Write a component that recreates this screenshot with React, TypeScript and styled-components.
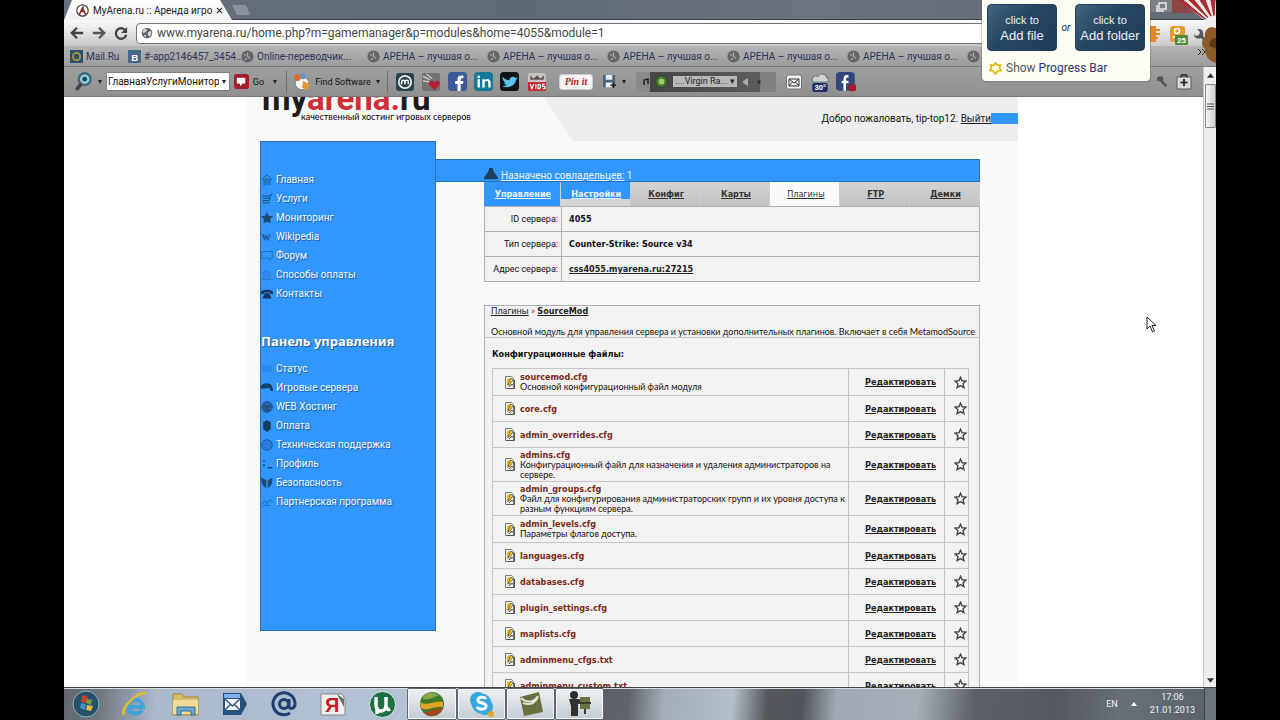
import React from "react";
import styled, { createGlobalStyle, css } from "styled-components";

const GlobalStyle = createGlobalStyle`
  * { box-sizing: border-box; }
  body { margin: 0; background: #000; }
  button, input { font: inherit; color: inherit; margin: 0; }
  button { cursor: pointer; }
`;

const ui = `Roboto, "Noto Sans", sans-serif`;
const heading = `"Noto Sans", "Open Sans", sans-serif`;
const strong = `"DejaVu Sans Condensed", "DejaVu Sans", sans-serif`;
const copy = `Lato, Roboto, sans-serif`;

/* ---------- window frame ---------- */

const Screen = styled.div`
  position: relative;
  height: 100vh;
  margin: 0 5%;
  display: flex;
  flex-direction: column;
  overflow: hidden;
  background: #fff;
  font-family: ${ui};
`;

const TabStrip = styled.header`
  display: flex;
  align-items: flex-start;
  height: 20px;
  flex: none;
  background: linear-gradient(90deg, #66707c, #5f6a77 40%, #6c737e 65%, #626a76);
  border-bottom: 1px solid #3c424b;
`;

const Tab = styled.div`
  display: flex;
  align-items: center;
  gap: 4px;
  width: 168px;
  height: 20px;
  padding: 0 12px;
  background: linear-gradient(#fff, #f2f2f2);
  clip-path: polygon(0 100%, 8px 0, 156px 0, 100% 100%);
  font-size: 10px;
  color: #222;
`;

const TabTitle = styled.span`
  flex: 1;
  white-space: nowrap;
`;

const PlainButton = styled.button`
  display: flex;
  align-items: center;
  justify-content: center;
  padding: 0;
  border: 0;
  background: none;
`;

const NewTab = styled(PlainButton)`
  width: 18px;
  height: 10px;
  margin-top: 5px;
  background: #8b929b;
  clip-path: polygon(0 0, 14px 0, 100% 100%, 5px 100%);
`;

const AddressRow = styled.div`
  display: flex;
  align-items: center;
  height: 26px;
  flex: none;
  padding: 0 50px 0 2px;
  background: linear-gradient(#fafafa, #c9c9c9);
`;

const NavButton = styled(PlainButton)`
  width: 22px;
  height: 22px;
`;

const UrlBox = styled.div`
  flex: 1;
  display: flex;
  align-items: center;
  gap: 4px;
  height: 21px;
  margin: 0 20px 0 4px;
  padding: 0 4px;
  border: 1px solid #777;
  border-radius: 4px;
  background: #fff;
`;

const UrlInput = styled.input`
  flex: 1;
  min-width: 0;
  padding: 0;
  border: 0;
  outline: 0;
  background: none;
  font-size: 12px;
  color: #444;
`;

const BookmarkBar = styled.nav`
  display: flex;
  align-items: center;
  height: 21px;
  flex: none;
  padding-left: 6px;
  background: linear-gradient(#b4b4b4, #9c9c9c);
  border-bottom: 1px solid #7a7a7a;
  overflow: hidden;
`;

const Bookmark = styled.a<{ $width: number }>`
  display: flex;
  align-items: center;
  gap: 3px;
  flex: none;
  width: ${(p) => p.$width}px;
  font-size: 10px;
  color: #2c3560;
  white-space: nowrap;
  text-decoration: none;
`;

/* ---------- extension toolbar ---------- */

const Body = styled.div`
  flex: 1;
  min-height: 0;
  display: flex;
`;

const BodyMain = styled.div`
  flex: 1;
  min-width: 0;
  display: flex;
  flex-direction: column;
`;

const Toolbar = styled.div`
  display: flex;
  align-items: center;
  height: 30px;
  flex: none;
  padding: 0 8px 0 6px;
  background: linear-gradient(#9f9f9f, #8f8f8f);
  border-bottom: 1px solid #777;
  font-size: 9px;
  color: #111;
`;

const ToolButton = styled(PlainButton)<{ $width?: number }>`
  width: ${(p) => p.$width ?? 26}px;
  height: 24px;
  gap: 4px;
  flex: none;
`;

const Combo = styled.div`
  display: flex;
  align-items: center;
  width: 124px;
  height: 19px;
  flex: none;
  background: #fff;
  border: 1px solid #808080;
`;

const ComboInput = styled.input`
  flex: 1;
  min-width: 0;
  padding: 0 0 0 1px;
  border: 0;
  outline: 0;
  background: none;
  font-size: 10px;
`;

const Divider = styled.span`
  width: 1px;
  height: 22px;
  margin: 0 4px;
  background: #6e6e6e;
`;

const Spacer = styled.span`
  flex: 1;
`;

const PinButton = styled.button`
  width: 34px;
  height: 16px;
  margin: 0 4px 0 7px;
  padding: 0;
  border: 1px solid #ccc;
  border-radius: 3px;
  background: #f6f4f4;
  color: #b8232c;
  font: italic bold 10px/12px "Liberation Serif", serif;
`;

const Radio = styled.div`
  display: flex;
  align-items: center;
  gap: 5px;
  width: 140px;
  height: 20px;
  margin: 0 5px;
  padding: 0 6px;
  background: linear-gradient(90deg, #8a8a8a 14px, #454545 14px, #5c5c5c 124px, #808080 124px);
`;

const Station = styled.button`
  width: 64px;
  height: 11px;
  padding: 0;
  border: 0;
  background: #b9b9b9;
  font-size: 9px;
  line-height: 11px;
  color: #222;
`;

/* ---------- scroll bar ---------- */

const ScrollBar = styled.div`
  display: flex;
  flex-direction: column;
  align-items: center;
  width: 13px;
  flex: none;
  padding: 5px 0 3px;
  background: #eee;
  border-left: 1px solid #c4c4c4;
`;

const Thumb = styled.div`
  display: flex;
  align-items: center;
  justify-content: center;
  width: 11px;
  height: 44px;
  margin-top: 5px;
  border: 1px solid #888;
  border-radius: 1px;
  background: linear-gradient(90deg, #f4f4f4, #cfcfcf);
`;

/* ---------- site ---------- */

const Viewport = styled.main`
  flex: 1;
  min-height: 0;
  padding-right: 2px;
  overflow: hidden;
  background: #fff;
  font-size: 9px;
  color: #111;
`;

const Page = styled.div`
  max-width: 771px;
  margin: 0 auto;
  background: #f9f9f9;
`;

const PageHeader = styled.div`
  display: flex;
  justify-content: space-between;
  height: 44px;
  padding-left: 15px;
  overflow: hidden;
  background: linear-gradient(56deg, #f9f9f9 270px, #eee 271px);
`;

const Brand = styled.div`
  margin-top: -18px;
`;

const Logo = styled.div`
  height: 32px;
  font: bold 33px/40px Roboto, sans-serif;
  color: #1c1c1c;
  white-space: nowrap;
`;

const Red = styled.span`
  color: #cf2f35;
`;

const Tagline = styled.div`
  margin-left: 39px;
  font-family: ${copy};
  font-size: 9px;
  line-height: 12px;
  color: #000;
`;

const Welcome = styled.div`
  display: flex;
  height: 12px;
  margin-top: 16px;
  font-size: 10px;
  line-height: 12px;
  white-space: pre;
`;

const Selected = styled.span`
  width: 27px;
  height: 11px;
  background: #3297fd;
`;

const DarkLink = styled.a`
  color: #222;
  font-weight: inherit;
`;

const Columns = styled.div`
  display: flex;
  align-items: flex-start;
  padding-left: 13px;
`;

const Sidebar = styled.aside`
  width: 176px;
  height: 490px;
  flex: none;
  padding-top: 28px;
  background: #3297fd;
  border: 1px solid #2a6fb5;
  color: #fff;
`;

const Menu = styled.ul`
  margin: 0;
  padding: 0;
  list-style: none;
`;

const MenuLink = styled.a`
  display: flex;
  align-items: center;
  gap: 3px;
  height: 19px;
  font-size: 10px;
  line-height: 19px;
  color: #f3f9ff;
  text-decoration: none;
  text-shadow: 1px 1px 1px #1d5a9a;
  white-space: nowrap;
`;

const MenuTitle = styled.h2`
  margin: 28px 0 8px;
  font-family: ${heading};
  font-size: 13px;
  line-height: 20px;
  font-weight: bold;
  text-shadow: 1px 1px 1px #1d5a9a;
  white-space: nowrap;
`;

const Main = styled.div`
  flex: 1;
  min-width: 0;
  padding: 18px 38px 0 0;
`;

const Notice = styled.div`
  display: flex;
  align-items: flex-end;
  gap: 3px;
  height: 23px;
  padding-left: 48px;
  background: #3297fd;
  border: 1px solid #2a6fb5;
  border-left: 0;
  font-size: 10px;
  line-height: 10px;
  color: #eaf4ff;
`;

const NoticeLink = styled.a`
  color: inherit;
`;

const Panels = styled.div`
  padding-left: 48px;
`;

const Tabs = styled.nav`
  display: grid;
  grid-template-columns: 77fr repeat(6, 70fr);
  height: 24px;
`;

const SiteTab = styled.a<{ $state?: "selected" | "partial" | "current" }>`
  display: flex;
  align-items: center;
  justify-content: center;
  padding-left: 2px;
  background: linear-gradient(#d2d2d2, #c3c3c3);
  border-right: 1px solid #cfcfcf;
  color: #333;
  font-family: ${strong};
  font-weight: bold;
  ${(p) => p.$state === "selected" && css`background: #3297fd; color: #eaf4ff;`}
  ${(p) => p.$state === "partial" && css`
    background: linear-gradient(#3297fd 17px, #d5d5d5 17px);
    color: #eaf4ff;
  `}
  ${(p) => p.$state === "current" && css`background: #fafafa; font-weight: normal;`}
`;

const InfoTable = styled.table`
  width: 100%;
  border-collapse: collapse;
  background: #f2f2f2;
`;

const InfoCell = styled.td`
  height: 25px;
  padding: 0 7px;
  border: 1px solid #b0b0b0;
  border-left: 0;
  font-family: ${strong};
  font-weight: bold;
`;

const InfoLabel = styled.th`
  width: 77px;
  height: 25px;
  padding: 0 3px;
  border: 1px solid #b0b0b0;
  font-weight: normal;
  text-align: right;
`;

const Plugin = styled.section`
  margin-top: 23px;
  border: 1px solid #b0b0b0;
  background: #f2f2f2;
`;

const Crumbs = styled.div`
  height: 20px;
  padding-left: 6px;
  line-height: 11px;
`;

const Strong = styled.b`
  font-family: ${strong};
`;

const Description = styled.p`
  margin: 0;
  padding-left: 6px;
  height: 12px;
  border-bottom: 1px solid #c4c4c4;
  font-family: ${copy};
  line-height: 12px;
  white-space: nowrap;
`;

const Files = styled.div`
  padding: 9px 10px 0 7px;
`;

const FilesTitle = styled.h3`
  margin: 0 0 7px;
  font-family: ${strong};
  font-size: 9px;
  line-height: 14px;
`;

const FileTable = styled.table`
  width: 100%;
  border-collapse: collapse;
  table-layout: fixed;
`;

const FileRow = styled.tr<{ $lines: number }>`
  height: ${(p) => [26, 27, 34][p.$lines]}px;
`;

const FileCell = styled.td<{ $width?: number; $center?: boolean }>`
  width: ${(p) => (p.$width ? p.$width + "px" : "auto")};
  padding: 0;
  border: 1px solid #c4c4c4;
  font-family: ${copy};
  line-height: 10px;
  ${(p) => p.$center && css`
    padding-left: 8px;
    font-family: ${strong};
    font-weight: bold;
    text-align: center;
  `}
`;

const FileInfo = styled.div`
  display: flex;
  align-items: center;
  gap: 4px;
  padding-left: 11px;
`;

const FileName = styled.a`
  display: block;
  font-family: ${strong};
  font-weight: bold;
  color: #7c2a17;
  text-decoration: none;
`;

const StarButton = styled(PlainButton)`
  width: 100%;
`;

/* ---------- upload popup ---------- */

const Popup = styled.aside`
  position: absolute;
  top: 0;
  right: 66px;
  width: 168px;
  height: 81px;
  padding: 4px 5px 0;
  background: #fdfdf3;
  border-radius: 0 0 4px 4px;
  box-shadow: 0 0 2px #555;
`;

const PopupRow = styled.div`
  display: flex;
  align-items: center;
  justify-content: space-between;
  font: italic 10px ${ui};
  color: #222;
`;

const UploadButton = styled.button`
  width: 70px;
  height: 47px;
  padding: 0;
  border: 1px solid #23405a;
  border-radius: 4px;
  background: linear-gradient(135deg, #43627c, #27465f 45%, #1f3d56);
  color: #e6f3fc;
  font: normal 13px/15px "Liberation Sans", sans-serif;
`;

const Small = styled.span`
  display: block;
  font-size: 11px;
`;

const Progress = styled.div`
  display: flex;
  align-items: center;
  gap: 4px;
  margin-top: 8px;
  padding-left: 2px;
  font-size: 12px;
  line-height: 18px;
  color: #555;
`;

const ProgressLink = styled.a`
  color: #26366b;
  text-decoration: none;
`;

const Corner = styled.div`
  position: absolute;
  top: 0;
  right: 0;
  width: 66px;
  height: 67px;
`;

const Pointer = styled.svg`
  position: absolute;
  top: 316px;
  right: 59px;
`;

/* ---------- task bar ---------- */

const TaskBar = styled.footer`
  display: flex;
  align-items: stretch;
  height: 33px;
  flex: none;
  border-top: 1px solid #444;
  box-shadow: inset 0 1px 0 #d8dce0;
  background: linear-gradient(
    95deg, #63676d 0, #6f757d 3%, #a9b8ca 8%, #b7c6d8 38%, #98a5b1 42%, #5c6066 47%, #60646a 49%,
    #a3adb7 52%, #b3bec8 58%, #55575d 61%, #505359 64%, #a0aab4 67%, #a6afb8 74%,
    #5c6066 79%, #55585e 86%, #687079 92%, #5a6068
  );
`;

const Task = styled(PlainButton)<{ $open?: boolean; $width?: number }>`
  width: ${(p) => p.$width ?? 49}px;
  ${(p) => p.$open && css`
    border: 1px solid #5f6870;
    border-radius: 2px;
    background: linear-gradient(#eef1f4, #c3ccd4);
    box-shadow: inset 0 0 0 1px #f4f6f8;
  `}
`;

const Tray = styled.div`
  display: flex;
  align-items: center;
  gap: 13px;
  padding-right: 9px;
  font-size: 9px;
  line-height: 13px;
  color: #f2f5f8;
  text-align: center;
`;

const ShowDesktop = styled(PlainButton)`
  width: 12px;
  border-left: 1px solid #3f444a;
  background: #6c737b;
`;

/* ---------- drawings ---------- */

const Drawing = styled.svg`
  flex: none;
`;

const Svg = ({ s = 16, vb = "0 0 16 16", label, children }: { s?: number; vb?: string; label?: string; children: React.ReactNode }) => (
  <Drawing width={s} height={s} viewBox={vb} aria-hidden={!label} aria-label={label}>{children}</Drawing>
);

const Caret = () => <Svg s={6} vb="0 0 6 6"><path d="M1 1h4L3 5z" fill="#222" /></Svg>;

const Globe = ({ s = 13 }: { s?: number }) => (
  <Svg s={s}>
    <circle cx="8" cy="8" r="7" fill="#5f6266" />
    <path d="M3 4l3-2 2 2-1 2-3 2-2-1zM9 7l4-2 1 4-3 4-2-3zM5 10l2 1-1 3-2-2z" fill="#d5d8da" />
  </Svg>
);

/* Round grey clock badge of a bookmark without its own icon */
const Badge = () => (
  <Svg s={13}>
    <circle cx="8" cy="8" r="7.500" fill="#62656a" />
    <path d="M8 3v5l3 2M4 5l2 2M5 12l2-2" fill="none" stroke="#a9acb0" strokeWidth="1.500" />
  </Svg>
);

const Star = () => (
  <Svg s={13}>
    <path d="M8 1.500l1.900 4.400 4.800.4-3.600 3.200 1.100 4.800L8 11.800l-4.200 2.500 1.100-4.800L1.300 6.300l4.800-.4z" fill="#fff" stroke="#444" strokeWidth="1.700" />
  </Svg>
);

const FileIcon = () => (
  <Drawing width="12" height="13" viewBox="0 0 12 13" aria-hidden>
    <path d="M1.500.5h6l2 2v10h-8z" fill="#f1f1f1" stroke="#777" />
    <path d="M10.500 4v8.500H3" fill="none" stroke="#555" />
    <path d="M3 3l3-1 1 3-2 4-2 1z" fill="#e5b52a" />
    <path d="M7 2l2 2-3 4-2 1 1-3z" fill="#f4cf45" stroke="#54461a" strokeWidth=".7" />
    <path d="M5 11c1-2 3-3 4-2" fill="none" stroke="#333" />
  </Drawing>
);

const menuShapes: Record<string, React.ReactNode> = {
  home: <path d="M1 8l7-7 7 7M4 6v9M6.500 15V7h3v8M12 6v9" fill="none" stroke="#1e5587" strokeWidth="1.300" />,
  cart: <path d="M15 2h-2l-2 8H2M1 4h11M2 7h9M2 13h10" fill="none" stroke="#1e4f7d" strokeWidth="1.300" />,
  star: <path d="M8 0l2.300 5L16 5.500l-4 4 1 5.500-5-2-5 2 1-5.500-4-4L5.700 5z" fill="#1f4a6e" />,
  wiki: <text x="1" y="12" fontSize="12" fontFamily="Liberation Serif" fill="#1c4770">W</text>,
  chat: <path d="M1 2h14v9h-3v3l-3-3H1z" fill="none" stroke="#2470b8" strokeWidth="1.300" />,
  coin: <path d="M2 5a6 6 0 1 1 0 7M1 14h14" fill="#2f8aea" stroke="#2775c4" />,
  phone: <path d="M0 6c0-5 16-5 16 0v2h-4V6H4v2H0zM5 7h6l3 7H2z" fill="#16365c" />,
  status: <path d="M2 3h12v9H2z" fill="#2b87e8" />,
  pad: <path d="M0 5c4-5 13-4 15 1l1 6h-3L11 8 0 9z" fill="#173f66" />,
  net: <path d="M8 1a7 7 0 1 0 .1 0M3 4l5 4 5-3M8 8v6M4 11l8 1M2 8h12" fill="#2a68a5" stroke="#1b4674" strokeWidth="1.200" />,
  pay: <path d="M3 3l5-3 5 3v9l-5 4-5-4z" fill="#173c60" />,
  help: <circle cx="8" cy="8" r="7" fill="#2a7fdc" stroke="#1f5590" strokeWidth="1.300" />,
  profile: <path d="M4 3v2M4 8v3M9 13h6" stroke="#1c4770" strokeWidth="2" />,
  shield: <path d="M0 1l7 3v11C2 12 0 8 0 1zM9 4l6-3c1 7-2 12-6 14z" fill="#1f4b74" />,
  partner: <path d="M1 11l4-5 3 4 4-5 3 2M2 14l5-2 5 1" fill="none" stroke="#22639f" strokeWidth="1.300" />,
};

const MenuItem = ({ icon, text }: { icon: string; text: string }) => (
  <li><MenuLink href="#"><Svg s={12}>{menuShapes[icon]}</Svg>{text}</MenuLink></li>
);

/* ---------- data ---------- */

const mainMenu = [
  ["home", "Главная"], ["cart", "Услуги"], ["star", "Мониторинг"], ["wiki", "Wikipedia"],
  ["chat", "Форум"], ["coin", "Способы оплаты"], ["phone", "Контакты"],
];

const controlMenu = [
  ["status", "Статус"], ["pad", "Игровые сервера"], ["net", "WEB Хостинг"], ["pay", "Оплата"],
  ["help", "Техническая поддержка"], ["profile", "Профиль"], ["shield", "Безопасность"],
  ["partner", "Партнерская программа"],
];

const files: { name: string; note?: string; lines: number }[] = [
  { name: "sourcemod.cfg", note: "Основной конфигурационный файл модуля", lines: 1 },
  { name: "core.cfg", lines: 0 },
  { name: "admin_overrides.cfg", lines: 0 },
  { name: "admins.cfg", note: "Конфигурационный файл для назначения и удаления администраторов на сервере.", lines: 2 },
  { name: "admin_groups.cfg", note: "Файл для конфигурирования администраторских групп и их уровня доступа к разным функциям сервера.", lines: 2 },
  { name: "admin_levels.cfg", note: "Параметры флагов доступа.", lines: 1 },
  { name: "languages.cfg", lines: 0 },
  { name: "databases.cfg", lines: 0 },
  { name: "plugin_settings.cfg", lines: 0 },
  { name: "maplists.cfg", lines: 0 },
  { name: "adminmenu_cfgs.txt", lines: 0 },
  { name: "adminmenu_custom.txt", lines: 0 },
];

/* ---------- sections ---------- */

const Browser = () => (
  <>
    <TabStrip>
      <Tab>
        <Svg s={13} label="MyArena">
          <circle cx="8" cy="8" r="7" fill="#fff" stroke="#444" strokeWidth="1.500" />
          <path d="M9 3L4 13M8 5l2 4 2 4M6 9h4" fill="none" stroke="#8c2a26" strokeWidth="2" />
        </Svg>
        <TabTitle>MyArena.ru :: Аренда игро</TabTitle>
        <PlainButton aria-label="Закрыть вкладку"><Svg s={7} vb="0 0 8 8"><path d="M1 1l6 6M7 1L1 7" stroke="#333" strokeWidth="1.500" /></Svg></PlainButton>
      </Tab>
      <NewTab aria-label="Новая вкладка" />
    </TabStrip>
    <AddressRow>
      <NavButton aria-label="Назад"><Svg s={14}><path d="M15 8H3M8 2L2 8l6 6" fill="none" stroke="#444" strokeWidth="2.600" /></Svg></NavButton>
      <NavButton aria-label="Вперёд"><Svg s={14}><path d="M1 8h12M8 2l6 6-6 6" fill="none" stroke="#555" strokeWidth="2.600" /></Svg></NavButton>
      <NavButton aria-label="Обновить"><Svg s={14}><path d="M13 5a6 6 0 1 0 1 5" fill="none" stroke="#444" strokeWidth="2.600" /><path d="M15 1v7H8z" fill="#444" /></Svg></NavButton>
      <UrlBox>
        <Globe s={12} />
        <UrlInput aria-label="Адрес" defaultValue="www.myarena.ru/home.php?m=gamemanager&p=modules&home=4055&module=1" />
      </UrlBox>
    </AddressRow>
    <BookmarkBar>
      <Bookmark href="#" $width={58}>
        <Svg s={13}><path d="M0 0h16v16H0z" fill="#2d506f" /><circle cx="8" cy="8" r="4.500" fill="none" stroke="#b39b3c" strokeWidth="2" /></Svg>Mail.Ru
      </Bookmark>
      <Bookmark href="#" $width={113}>
        <Svg s={13}><path d="M0 0h16v16H0z" fill="#45668e" /><text x="4" y="13" fontSize="12" fontWeight="bold" fontFamily="Liberation Sans" fill="#fff">B</text></Svg>#-app2146457_3454...
      </Bookmark>
      <Bookmark href="#" $width={126}><Badge />Online-переводчик...</Bookmark>
      {[0, 1, 2, 3, 4].map((i) => <Bookmark key={i} href="#" $width={120}><Badge />АРЕНА – лучшая о...</Bookmark>)}
      <Bookmark href="#" aria-label="Закладка" $width={13}><Badge /></Bookmark>
    </BookmarkBar>
  </>
);

const Extensions = () => (
  <Toolbar>
    <ToolButton aria-label="Поиск" $width={36}>
      <Svg s={19}><circle cx="9" cy="6" r="5" fill="#9cc9d4" stroke="#356b7c" strokeWidth="2" /><circle cx="9" cy="6" r="2" fill="#164a5c" /><path d="M6 10l-4 5" stroke="#444" strokeWidth="3" /></Svg><Caret />
    </ToolButton>
    <Combo>
      <ComboInput aria-label="Запрос" defaultValue="ГлавнаяУслугиМонитор" />
      <ToolButton aria-label="История" $width={10}><Caret /></ToolButton>
    </Combo>
    <ToolButton $width={38}>
      <Svg s={15}><rect width="16" height="16" rx="3" fill="#a61d26" /><path d="M3 4h9v6H9l-2 3-1-3H3z" fill="#fff" /></Svg>Go
    </ToolButton>
    <ToolButton aria-label="Параметры" $width={14}><Caret /></ToolButton>
    <Divider />
    <ToolButton $width={92}>
      <Svg s={18}><circle cx="8" cy="9" r="6" fill="#f4f4f4" stroke="#888" /><path d="M9 7l6 3-2 5-5-2z" fill="#e2972c" /><circle cx="4" cy="4" r="3" fill="#d76a2c" /><circle cx="9" cy="3" r="2.500" fill="#5e95cf" /></Svg>Find Software<Caret />
    </ToolButton>
    <Divider />
    <ToolButton aria-label="Alexa"><Svg s={18}><rect width="16" height="16" rx="3" fill="#27434e" /><circle cx="8" cy="8" r="5.500" fill="none" stroke="#e9eef0" strokeWidth="1.500" /><path d="M5 10V8a1.500 1.500 0 0 1 3 0v2M8 10V8a1.500 1.500 0 0 1 3 0v2" fill="none" stroke="#fff" strokeWidth="1.400" /></Svg></ToolButton>
    <ToolButton aria-label="Избранное"><Svg s={18}><rect width="16" height="16" rx="2" fill="#77706f" /><path d="M1 3l6 3M1 7l6 1M4 1l5 4" stroke="#ddd" /><path d="M11 15L6 10c0-4 4-4 5-1 1-3 5-3 5 1z" fill="#b71c32" /></Svg></ToolButton>
    <ToolButton aria-label="Facebook"><Svg s={19}><rect width="16" height="16" rx="3" fill="#3b5998" /><path d="M8 16v-6H6V7.500h2V6c0-2.500 1.500-3.500 5-3v2.300c-2-.2-2.300 0-2.300 2.200H13l-.4 2.500h-1.900v6z" fill="#fff" /></Svg></ToolButton>
    <ToolButton aria-label="LinkedIn"><Svg s={19}><rect width="16" height="16" rx="3" fill="#167a94" /><path d="M3 6h2v7H3zM3 3h2v2H3zM7 6h2v1c2-2 5-1 5 2v4h-2V9c0-2-3-2-3 0v4H7z" fill="#fff" /></Svg></ToolButton>
    <ToolButton aria-label="Twitter"><Svg s={19}><rect width="16" height="16" rx="3" fill="#101418" /><path d="M2 4c2 2 4 3 6 3 0-3 3-4 5-2l2-.5-1.500 2C13 12 6 14 2 12c2 0 3-.5 4-1-2-.5-2-1-2.500-2h1C3 8 2 6 2 4z" fill="#5cc3f0" /></Svg></ToolButton>
    <ToolButton aria-label="Видео" $width={30}><Svg s={18}><rect width="16" height="16" rx="2" fill="#c9c3c2" /><path d="M2 2l3 3 3-3 3 3 3-3v4H2z" fill="#615453" /><path d="M0 8h16v8H0z" fill="#c42b36" /><path d="M2 10l1.500 4L5 10M7 10v4M9 10v4c3 0 3-4 0-4M15 10h-2v2h2v2h-2" fill="none" stroke="#fff" /></Svg></ToolButton>
    <PinButton>Pin it</PinButton>
    <ToolButton aria-label="Сохранить" $width={34}><Svg s={15}><path d="M1 1h13v13H1z" fill="#46647e" /><path d="M4 1h7v5H4zM4 9h7v5H4z" fill="#e8edf0" /><path d="M12 9v6M9 12h6" stroke="#222" strokeWidth="1.500" /></Svg><Caret /></ToolButton>
    <Radio>
      <Svg s={8} vb="0 0 8 8"><path d="M2 7V2l4-1v5" fill="none" stroke="#222" strokeWidth="1.500" /></Svg>
      <Svg s={13}><circle cx="8" cy="8" r="7" fill="#4d7c2d" stroke="#253d17" /><circle cx="8" cy="8" r="3.500" fill="#9fce6d" /></Svg>
      <Station>....Virgin Ra... ▾</Station>
      <Svg s={10} vb="0 0 10 10"><path d="M1 4l5-3v8L1 6z" fill="#aaa" /></Svg>
      <span>«</span>
    </Radio>
    <ToolButton aria-label="Почта"><Svg s={16}><rect x=".5" y="1" width="15" height="14" rx="2" fill="#f4f4f4" stroke="#777" /><path d="M3 5h10v7H3zl5 4 5-4M3 12l3.500-4M13 12L9.500 8" fill="none" stroke="#333" /></Svg></ToolButton>
    <ToolButton aria-label="Погода"><Svg s={22} vb="0 0 20 20"><path d="M4 10c-3-3 1-7 4-5 2-4 8-2 8 1 3 1 2 4 0 4z" fill="#d2d2d2" stroke="#777" /><rect x="3" y="11" width="14" height="8" rx="2" fill="#1f2d69" /><text x="5" y="17" fontSize="7" fontWeight="bold" fontFamily="Liberation Sans" fill="#fff">30°</text></Svg></ToolButton>
    <ToolButton aria-label="Уведомления Facebook"><Svg s={20}><rect width="15" height="15" rx="3" fill="#33477d" /><path d="M6 15V9H4.500V7H6c0-4 1-5 4-4.500v2C8 4.300 8 5 8 7h2v2H8v6z" fill="#fff" /><path d="M10 10h6v5h-2l-1 1-1-1h-2z" fill="#a41c2c" /></Svg></ToolButton>
    <Spacer />
    <ToolButton aria-label="Настройка" $width={22}><Svg s={13}><path d="M2 3l11 11M2 7l4-5M7 2l1 5" stroke="#555" strokeWidth="3" /></Svg></ToolButton>
    <ToolButton aria-label="Добавить" $width={22}><Svg s={16}><path d="M1 3h14v12H1z" fill="#d9d9d9" stroke="#555" /><path d="M5 3c0-3 6-3 6 0M8 5v7M4.500 8.500h7" fill="none" stroke="#333" strokeWidth="2" /></Svg></ToolButton>
  </Toolbar>
);

const Site = () => (
  <Viewport>
    <Page>
      <PageHeader>
        <Brand>
          <Logo>my<Red>arena.</Red>ru</Logo>
          <Tagline>качественный хостинг игровых серверов</Tagline>
        </Brand>
        <Welcome>Добро пожаловать, tip-top12. <DarkLink href="#">Выйти</DarkLink><Selected /></Welcome>
      </PageHeader>
      <Columns>
        <Sidebar>
          <Menu>{mainMenu.map(([i, t]) => <MenuItem key={i} icon={i} text={t} />)}</Menu>
          <MenuTitle>Панель управления</MenuTitle>
          <Menu>{controlMenu.map(([i, t]) => <MenuItem key={i} icon={i} text={t} />)}</Menu>
        </Sidebar>
        <Main>
          <Notice>
            <Svg s={14}><path d="M6 1h4l1 4 5 7v2H0v-2l5-7z" fill="#1c3f5c" /></Svg>
            <span><NoticeLink href="#">Назначено совладельцев:</NoticeLink> 1</span>
          </Notice>
          <Panels>
            <Tabs>
              <SiteTab href="#" $state="selected">Управление</SiteTab>
              <SiteTab href="#" $state="partial">Настройки</SiteTab>
              <SiteTab href="#">Конфиг</SiteTab>
              <SiteTab href="#">Карты</SiteTab>
              <SiteTab href="#" $state="current">Плагины</SiteTab>
              <SiteTab href="#">FTP</SiteTab>
              <SiteTab href="#">Демки</SiteTab>
            </Tabs>
            <InfoTable>
              <tbody>
                <tr><InfoLabel scope="row">ID сервера:</InfoLabel><InfoCell>4055</InfoCell></tr>
                <tr><InfoLabel scope="row">Тип сервера:</InfoLabel><InfoCell>Counter-Strike: Source v34</InfoCell></tr>
                <tr><InfoLabel scope="row">Адрес сервера:</InfoLabel><InfoCell><DarkLink href="#">css4055.myarena.ru:27215</DarkLink></InfoCell></tr>
              </tbody>
            </InfoTable>
            <Plugin>
              <Crumbs><DarkLink href="#">Плагины</DarkLink> <Red>»</Red> <Strong><DarkLink href="#">SourceMod</DarkLink></Strong></Crumbs>
              <Description>Основной модуль для управления сервера и установки дополнительных плагинов. Включает в себя MetamodSource</Description>
              <Files>
                <FilesTitle>Конфигурационные файлы:</FilesTitle>
                <FileTable>
                  <tbody>
                    {files.map((f) => (
                      <FileRow key={f.name} $lines={f.lines}>
                        <FileCell>
                          <FileInfo><FileIcon /><div><FileName href="#">{f.name}</FileName>{f.note}</div></FileInfo>
                        </FileCell>
                        <FileCell $width={96} $center><DarkLink href="#">Редактировать</DarkLink></FileCell>
                        <FileCell $width={24} $center><StarButton aria-label="В избранное"><Star /></StarButton></FileCell>
                      </FileRow>
                    ))}
                  </tbody>
                </FileTable>
              </Files>
            </Plugin>
          </Panels>
        </Main>
      </Columns>
    </Page>
  </Viewport>
);

const UploadPopup = () => (
  <Popup>
    <PopupRow>
      <UploadButton><Small>click to</Small>Add file</UploadButton>
      or
      <UploadButton><Small>click to</Small>Add folder</UploadButton>
    </PopupRow>
    <Progress>
      <Svg s={13}><path d="M8 1l2 3 4-.5L13 7.500l2 3-4 .5-3 4-3-4-4-.5 2-3L2 3.500 6 4z" fill="#fffbe0" stroke="#dcb800" strokeWidth="2" /></Svg>
      <span>Show <ProgressLink href="#">Progress Bar</ProgressLink></span>
    </Progress>
  </Popup>
);

const CornerArt = () => (
  <Corner>
    <svg width="66" height="67" viewBox="0 0 66 67" aria-hidden>
      <path d="M0 0h22v12H0z" fill="#7b7f86" /><path d="M22 0h34v13H22z" fill="#8c4744" />
      <path d="M9 3h7v6H9zM7 5v6h7" fill="none" stroke="#e8e8e8" strokeWidth="1.500" />
      <path d="M0 27h5v14H0zM0 30h10M0 34h10M0 38h8" stroke="#e08a24" strokeWidth="2" fill="#e08a24" />
      <rect x="20" y="26" width="15" height="16" rx="3" fill="#e99a2b" />
      <circle cx="27" cy="31" r="2.500" fill="none" stroke="#fff" strokeWidth="1.500" />
      <path d="M23 38c2-3 6-3 8 0" fill="none" stroke="#fff" strokeWidth="1.500" />
      <rect x="25" y="35" width="13" height="10" rx="1" fill="#4e8b3b" />
      <text x="27" y="43" fontSize="8" fontWeight="bold" fontFamily="Liberation Sans" fill="#fff">25</text>
      <path d="M47 29l3 3-1 3-3 1-2-2c0 5 5 5 7 4l8 8 2-2-8-8c1-4-1-7-4-7z" fill="#555" />
      <path d="M28 0l32 24 6-8V0z" fill="#efe9e6" />
      <path d="M28 0h5l25 21zM39 0h5l16 20zM50 0h5l7 18zM61 0h4l-1 17z" fill="#b32a35" stroke="#a3242e" />
      <path d="M54 22c2-5 8-7 12-6v14H54z" fill="#f0efed" />
      <path d="M66 28c-8-3-12 3-11 9-4 3-4 9 0 12 0 6 3 12 11 14z" fill="#8b5a26" />
      <path d="M66 38c-5 0-7 3-6 8l6 3z" fill="#5d3713" />
      <path d="M48 49l3 3-3 3M52 49l3 3-3 3" stroke="#222" fill="none" />
    </svg>
  </Corner>
);

const Tasks = () => (
  <TaskBar>
    <Task aria-label="Пуск" $width={44}><Svg s={28} vb="0 0 28 28">
      <circle cx="14" cy="14" r="13" fill="#26516b" stroke="#8fb2c4" />
      <path d="M10 6c3-2 5 0 6 2l-2 5-5-1z" fill="#c2432a" /><path d="M9 13l5 1-1 6-5-2z" fill="#3e92c6" /><path d="M15 9c2 1 3 1 5 0l-1 6-5-2z" fill="#7aa03c" /><path d="M15 15l6 1-2 5-5-1z" fill="#e8b944" />
    </Svg></Task>
    <Task aria-label="Internet Explorer" $width={53}><Svg s={27} vb="0 0 27 27">
      <path d="M21 19c-4 6-14 4-14-4s14-9 15 1H8" fill="none" stroke="#3ea4dc" strokeWidth="4" /><path d="M3 24C-1 18 15 1 25 2" fill="none" stroke="#e2bd33" strokeWidth="2.500" />
    </Svg></Task>
    <Task aria-label="Проводник"><Svg s={28} vb="0 0 28 28">
      <path d="M1 4h9l2 3h14v18H1z" fill="#d8bd69" stroke="#a38632" /><path d="M1 10h25v14H1z" fill="#efdd97" /><path d="M5 25v-8h18v8h-4v-4H9v4z" fill="#6ba5d2" stroke="#3d6d96" />
    </Svg></Task>
    <Task aria-label="Почта"><Svg s={26} vb="0 0 26 26">
      <path d="M1 2h18l6 11-6 11H1z" fill="#27507d" /><path d="M3 8h15v11H3z" fill="#f2f6fa" /><path d="M3 8l7.500 7L18 8M3 19l6-6M18 19l-6-6" fill="none" stroke="#36597f" strokeWidth="1.500" /><path d="M2 3h16v4H2z" fill="#82b0ef" />
    </Svg></Task>
    <Task aria-label="Mail.Ru Агент"><Svg s={26} vb="0 0 26 26">
      <circle cx="13" cy="13" r="4.500" fill="none" stroke="#1f3f70" strokeWidth="3" /><path d="M18 8v7c0 4 6 3 6-2A11 11 0 1 0 19 22" fill="none" stroke="#1f3f70" strokeWidth="3" />
    </Svg></Task>
    <Task aria-label="Яндекс"><Svg s={26} vb="0 0 26 26">
      <path d="M1 3h21l3 5v16H1z" fill="#efefef" stroke="#888" /><path d="M17 3l7 5v8z" fill="#66696e" /><text x="5" y="21" fontSize="20" fontWeight="bold" fontFamily="Liberation Sans" fill="#c9201f">Я</text>
    </Svg></Task>
    <Task aria-label="uTorrent" $width={50}><Svg s={27} vb="0 0 27 27">
      <circle cx="13.500" cy="13.500" r="13" fill="#1c7144" stroke="#dce8e0" /><path d="M7 6v8c0 8 10 8 10 0V6M17 14c0 4 2 5 4 4M8 16v7" fill="none" stroke="#fff" strokeWidth="3.500" />
    </Svg></Task>
    <Task aria-label="Браузер" $open $width={50}><Svg s={26} vb="0 0 26 26">
      <circle cx="13" cy="13" r="12" fill="#3f7a2c" /><path d="M1 11c7 5 14-2 23 0v5c-9-2-15 5-22 1z" fill="#e2a226" /><path d="M4 21c6 1 12-5 20-4-3 9-15 11-20 4z" fill="#9f4a1e" /><path d="M4 6c5-6 12-5 16-1-6 0-8 5-16 3z" fill="#88a849" />
    </Svg></Task>
    <Task aria-label="Skype" $open><Svg s={26} vb="0 0 26 26">
      <circle cx="9" cy="9" r="8" fill="#34a8dc" /><circle cx="16" cy="16" r="8" fill="#34a8dc" /><circle cx="12.500" cy="12.500" r="10" fill="#34a8dc" /><path d="M17 8c-2-3-9-2-8 1.500C10 13 17 11 17 15c0 4-7 4-9 1" fill="none" stroke="#fff" strokeWidth="3" /><circle cx="22" cy="23" r="3" fill="#e7a22d" />
    </Svg></Task>
    <Task aria-label="Редактор" $open><Svg s={26} vb="0 0 26 26"><path d="M2 6l19-5 4 20-19 4z" fill="#6a6f3e" /><path d="M3 7c5 5 12 5 17-2M5 12c8 3 13-1 15-6" fill="none" stroke="#e1e3d8" strokeWidth="2" /></Svg></Task>
    <Task aria-label="Counter-Strike" $open><Svg s={28} vb="0 0 28 28"><circle cx="8" cy="5" r="4" fill="#2d2f2c" /><path d="M3 9h10l3 3-4 2v12H5V16z" fill="#30322f" /><path d="M14 7h10v12H14z" fill="#6b7440" /><path d="M11 13h14M19 19v5" stroke="#393c2f" strokeWidth="2" /></Svg></Task>
    <Spacer />
    <Tray>
      <span>EN</span>
      <Svg s={6} vb="0 0 6 6"><path d="M0 5l3-4 3 4z" fill="#fff" /></Svg>
      <time>17:06<br />21.01.2013</time>
    </Tray>
    <ShowDesktop aria-label="Свернуть все окна" />
  </TaskBar>
);

export default function App() {
  return (
    <>
      <GlobalStyle />
      <Screen>
        <Browser />
        <Body>
          <BodyMain>
            <Extensions />
            <Site />
          </BodyMain>
          <ScrollBar>
            <Svg s={7} vb="0 0 6 6"><path d="M0 5l3-4 3 4z" fill="#333" /></Svg>
            <Thumb><Svg s={7} vb="0 0 7 7"><path d="M0 1h7M0 3.500h7M0 6h7" stroke="#555" /></Svg></Thumb>
            <Spacer />
            <Svg s={7} vb="0 0 6 6"><path d="M0 1h6L3 5z" fill="#333" /></Svg>
          </ScrollBar>
        </Body>
        <Tasks />
        <CornerArt />
        <UploadPopup />
        <Pointer width="11" height="17" viewBox="0 0 11 17" aria-hidden>
          <path d="M1 1v12l3-3 2.500 6 2-1L6 9.500h4z" fill="#fff" stroke="#222" />
        </Pointer>
      </Screen>
    </>
  );
}
